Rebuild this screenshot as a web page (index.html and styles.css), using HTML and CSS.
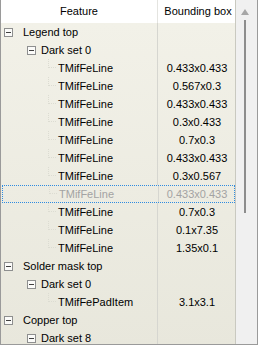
FILE: index.html
```html
<!DOCTYPE html>
<html>
<head>
<meta charset="utf-8">
<link rel="stylesheet" href="styles.css">
</head>
<body>
<div class="frame">
  <div class="tree">
    <div class="head">
      <div class="hcell c1">Feature</div>
      <div class="hcell c2">Bounding box</div>
    </div>
    <div class="body">
      <div class="row"><div class="cell c1 l0"><span class="exp"></span><span class="txt">Legend top</span></div><div class="cell c2"></div></div>
      <div class="row"><div class="cell c1 l1"><span class="exp"></span><span class="txt">Dark set 0</span></div><div class="cell c2"></div></div>
      <div class="row"><div class="cell c1 l2"><span class="leaf"></span><span class="txt">TMifFeLine</span></div><div class="cell c2">0.433x0.433</div></div>
      <div class="row"><div class="cell c1 l2"><span class="leaf"></span><span class="txt">TMifFeLine</span></div><div class="cell c2">0.567x0.3</div></div>
      <div class="row"><div class="cell c1 l2"><span class="leaf"></span><span class="txt">TMifFeLine</span></div><div class="cell c2">0.433x0.433</div></div>
      <div class="row"><div class="cell c1 l2"><span class="leaf"></span><span class="txt">TMifFeLine</span></div><div class="cell c2">0.3x0.433</div></div>
      <div class="row"><div class="cell c1 l2"><span class="leaf"></span><span class="txt">TMifFeLine</span></div><div class="cell c2">0.7x0.3</div></div>
      <div class="row"><div class="cell c1 l2"><span class="leaf"></span><span class="txt">TMifFeLine</span></div><div class="cell c2">0.433x0.433</div></div>
      <div class="row"><div class="cell c1 l2"><span class="leaf"></span><span class="txt">TMifFeLine</span></div><div class="cell c2">0.3x0.567</div></div>
      <div class="row focus disabled"><div class="cell c1 l2"><span class="leaf"></span><span class="txt">TMifFeLine</span></div><div class="cell c2">0.433x0.433</div></div>
      <div class="row"><div class="cell c1 l2"><span class="leaf"></span><span class="txt">TMifFeLine</span></div><div class="cell c2">0.7x0.3</div></div>
      <div class="row"><div class="cell c1 l2"><span class="leaf"></span><span class="txt">TMifFeLine</span></div><div class="cell c2">0.1x7.35</div></div>
      <div class="row"><div class="cell c1 l2"><span class="leaf"></span><span class="txt">TMifFeLine</span></div><div class="cell c2">1.35x0.1</div></div>
      <div class="row"><div class="cell c1 l0"><span class="exp"></span><span class="txt">Solder mask top</span></div><div class="cell c2"></div></div>
      <div class="row"><div class="cell c1 l1"><span class="exp"></span><span class="txt">Dark set 0</span></div><div class="cell c2"></div></div>
      <div class="row"><div class="cell c1 l2"><span class="leaf"></span><span class="txt">TMifFePadItem</span></div><div class="cell c2">3.1x3.1</div></div>
      <div class="row"><div class="cell c1 l0"><span class="exp"></span><span class="txt">Copper top</span></div><div class="cell c2"></div></div>
      <div class="row"><div class="cell c1 l1"><span class="exp"></span><span class="txt">Dark set 8</span></div><div class="cell c2"></div></div>
    </div>
  </div>
  <div class="scroll">
    <div class="arrow"></div>
    <div class="thumb"></div>
  </div>
</div>
</body>
</html>
```
FILE: styles.css
```css
html, body {
  margin: 0;
  padding: 0;
  background: #ffffff;
}
.frame {
  width: 258px;
  height: 345px;
  box-sizing: border-box;
  border-left: 1px solid #9a9a9a;
  border-right: 1px solid #9a9a9a;
  border-bottom: 1px solid #9a9a9a;
  display: flex;
  overflow: hidden;
  font-family: "Liberation Sans", Arial, sans-serif;
  font-size: 11px;
  color: #000;
}
.tree {
  width: 235px;
  display: flex;
  flex-direction: column;
  border-right: 1px solid #c9c9c0;
  overflow: hidden;
}
.head {
  height: 23px;
  display: flex;
  background: #ffffff;
  flex: none;
}
.hcell {
  display: flex;
  align-items: center;
  justify-content: center;
  padding-bottom: 1px;
  box-sizing: border-box;
}
.c1 {
  width: 157px;
  flex: none;
  border-right: 1px solid #d6d6d0;
  box-sizing: border-box;
}
.c2 {
  flex: 1;
}
.hcell.c1 {
  border-right: 1px solid #e4e4e0;
}
.hcell.c2 {
  padding-left: 3px;
}
.body {
  flex: 1;
  background: linear-gradient(#f2f1e8, #e8e7dc);
}
.row {
  height: 18px;
  display: flex;
  box-sizing: border-box;
}
.cell {
  display: flex;
  align-items: center;
  height: 18px;
  white-space: nowrap;
}
.cell.c2 {
  justify-content: center;
  padding-left: 1px;
}
.l0 { padding-left: 3px; }
.l1 { padding-left: 26px; }
.l2 { padding-left: 47px; }
.exp {
  width: 9px;
  height: 9px;
  box-sizing: border-box;
  border: 1px solid #8e8f8f;
  background: #fbfbf9;
  position: relative;
  flex: none;
  margin-right: 10px;
}
.exp::after {
  content: "";
  position: absolute;
  left: 1px;
  top: 3px;
  width: 5px;
  height: 1px;
  background: #404040;
}
.l1 .exp { margin-right: 5px; }
.leaf {
  width: 8px;
  height: 9px;
  flex: none;
  margin-right: 2px;
  margin-top: -9px;
  box-sizing: border-box;
  border-left: 1px dotted #dcdcd2;
  border-bottom: 1px dotted #dcdcd2;
}
.txt {
  line-height: 18px;
}
.focus {
  border: 1px dotted #2f8be0;
  margin-left: 1px;
}
.focus .cell { height: 16px; }
.focus .c1 { width: 156px; }
.focus .l2 { padding-left: 46px; }
.disabled {
  color: #a3a3a3;
}
.scroll {
  width: 21px;
  background: #f0f0f0;
  position: relative;
  flex: none;
}
.arrow {
  position: absolute;
  left: 5px;
  top: 9px;
  width: 0;
  height: 0;
  border-left: 4px solid transparent;
  border-right: 4px solid transparent;
  border-bottom: 6px solid #a6a6a6;
}
.thumb {
  position: absolute;
  left: 8px;
  top: 20px;
  width: 2px;
  height: 193px;
  background: #8d8d8d;
}
```
